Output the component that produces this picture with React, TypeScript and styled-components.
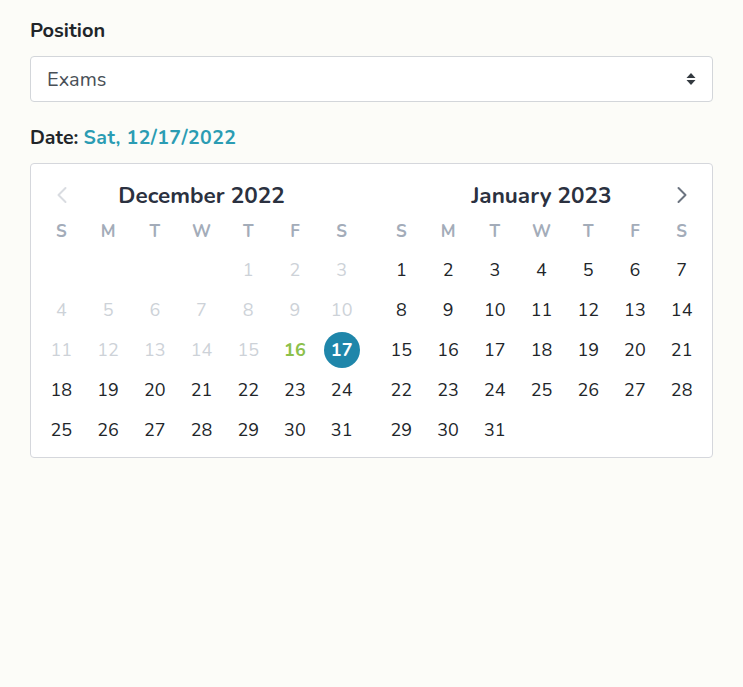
import React from "react";
import styled, { createGlobalStyle } from "styled-components";

const Global = createGlobalStyle`
  html, body { margin: 0; padding: 0; background: #fcfcf8; }
  body { font-family: "Nunito", "Lato", "Noto Sans", sans-serif; color: #212529; }
`;

const Page = styled.div`
  padding: 19px 30px 30px 30px;
  width: 683px;
  min-height: 638px;
`;

const Label = styled.div`
  font-size: 20px;
  font-weight: 700;
  color: #212529;
  line-height: 24px;
  margin-bottom: 13px;
`;

const SelectBox = styled.div`
  height: 44px;
  border: 1px solid #d3d6da;
  border-radius: 4px;
  background: #fff;
  display: flex;
  align-items: center;
  justify-content: space-between;
  padding: 0 16px 0 16px;
  font-size: 20px;
  color: #495057;
`;

const DateLine = styled.div`
  margin-top: 24px;
  font-size: 19.5px;
  font-weight: 700;
  line-height: 24px;
  color: #212529;
  margin-bottom: 13px;
`;

const DateValue = styled.span`
  color: #2b9cb3;
  letter-spacing: 0.4px;
`;

const Card = styled.div`
  border: 1px solid #d5d7dc;
  border-radius: 4px;
  background: #fff;
  padding: 15px 7px 7px 7px;
  display: grid;
  grid-template-columns: 327px 327px;
  column-gap: 13px;
`;

const Month = styled.div`
  display: flex;
  flex-direction: column;
`;

const Header = styled.div`
  height: 32px;
  display: flex;
  align-items: center;
  justify-content: space-between;
  position: relative;
`;

const Title = styled.div`
  position: absolute;
  left: 0;
  right: 0;
  text-align: center;
  font-size: 22.5px;
  font-weight: 700;
  color: #2b3140;
  pointer-events: none;
`;

const Nav = styled.span<{ $disabled?: boolean; $right?: boolean }>`
  display: flex;
  align-items: center;
  justify-content: center;
  width: 47px;
  height: 32px;
  margin-left: ${(p) => (p.$right ? "auto" : "0")};
  color: ${(p) => (p.$disabled ? "#d9dce1" : "#6c7480")};
`;

const Grid = styled.div`
  display: grid;
  grid-template-columns: repeat(7, 1fr);
`;

const Weekday = styled.div`
  height: 37px;
  margin-top: 2px;
  display: flex;
  align-items: center;
  justify-content: center;
  font-size: 17px;
  font-weight: 700;
  color: #a3acb9;
`;

type DayKind = "normal" | "disabled" | "today" | "selected" | "empty";

const Day = styled.div<{ $kind: DayKind }>`
  height: 40px;
  display: flex;
  align-items: center;
  justify-content: center;
  font-size: 18px;
  font-weight: ${(p) => (p.$kind === "today" || p.$kind === "selected" ? 700 : 400)};
  color: ${(p) =>
    p.$kind === "disabled"
      ? "#cdd2d8"
      : p.$kind === "today"
      ? "#8cc04b"
      : p.$kind === "selected"
      ? "#fff"
      : "#212529"};
`;

const Circle = styled.span`
  width: 36px;
  height: 36px;
  border-radius: 50%;
  background: #1f86aa;
  display: flex;
  align-items: center;
  justify-content: center;
`;

const Chevron = ({ dir }: { dir: "left" | "right" }) => (
  <svg width="12" height="20" viewBox="0 0 12 20" fill="none">
    <path
      d={dir === "left" ? "M9.5 3 L2.5 10 L9.5 17" : "M2.5 3 L9.5 10 L2.5 17"}
      stroke="currentColor"
      strokeWidth="2"
      strokeLinecap="round"
      strokeLinejoin="round"
    />
  </svg>
);

const SortIcon = () => (
  <svg width="10" height="14" viewBox="0 0 10 14">
    <path d="M5 1 L9.5 6 H0.5 Z" fill="#343a40" />
    <path d="M5 13 L9.5 8 H0.5 Z" fill="#343a40" />
  </svg>
);

const WEEK = ["S", "M", "T", "W", "T", "F", "S"];

type Cell = { n: number; kind: DayKind };

function buildMonth(offset: number, days: number, kindOf: (d: number) => DayKind): Cell[] {
  const cells: Cell[] = [];
  for (let i = 0; i < offset; i++) cells.push({ n: 0, kind: "empty" });
  for (let d = 1; d <= days; d++) cells.push({ n: d, kind: kindOf(d) });
  return cells;
}

const dec = buildMonth(4, 31, (d) => (d < 16 ? "disabled" : d === 16 ? "today" : d === 17 ? "selected" : "normal"));
const jan = buildMonth(0, 31, () => "normal");

const MonthView = ({ title, cells, nav }: { title: string; cells: Cell[]; nav: "left" | "right" }) => (
  <Month>
    <Header>
      <Title>{title}</Title>
      {nav === "left" ? (
        <Nav $disabled>
          <Chevron dir="left" />
        </Nav>
      ) : (
        <Nav $right>
          <Chevron dir="right" />
        </Nav>
      )}
    </Header>
    <Grid>
      {WEEK.map((w, i) => (
        <Weekday key={i}>{w}</Weekday>
      ))}
      {cells.map((c, i) =>
        c.kind === "empty" ? (
          <Day key={i} $kind="empty" />
        ) : (
          <Day key={i} $kind={c.kind}>
            {c.kind === "selected" ? <Circle>{c.n}</Circle> : c.n}
          </Day>
        )
      )}
    </Grid>
  </Month>
);

export default function App() {
  return (
    <>
      <Global />
      <Page>
        <Label>Position</Label>
        <SelectBox>
          <span>Exams</span>
          <SortIcon />
        </SelectBox>
        <DateLine>
          Date: <DateValue>Sat, 12/17/2022</DateValue>
        </DateLine>
        <Card>
          <MonthView title="December 2022" cells={dec} nav="left" />
          <MonthView title="January 2023" cells={jan} nav="right" />
        </Card>
      </Page>
    </>
  );
}
